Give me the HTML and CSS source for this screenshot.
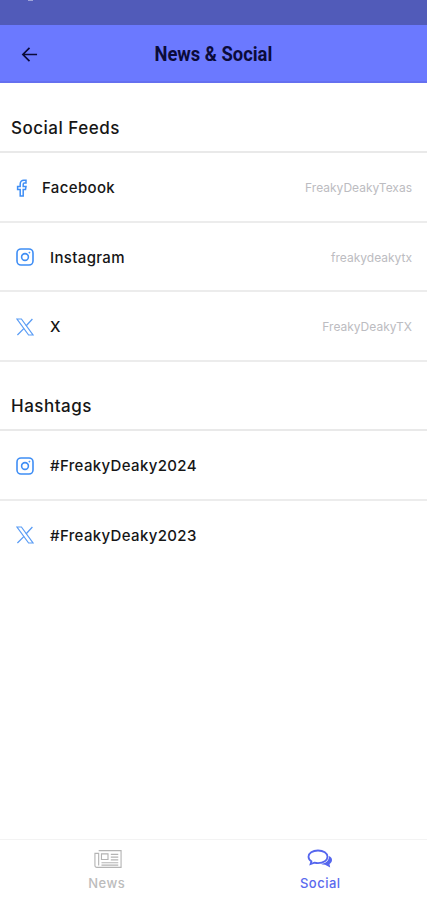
FILE: index.html
```html
<!DOCTYPE html>
<html lang="en">
<head>
  <meta charset="UTF-8">
  <meta name="viewport" content="width=device-width, initial-scale=1.0" />
  <title>News &amp; Social</title>
  <link rel="stylesheet" href="styles.css">
</head>
<body>
  <div class="status-bar"><span class="status-mark"></span></div>
  <header class="top-bar">
    <svg class="back-icon" viewBox="0 0 18 18" width="17" height="17" fill="none" stroke="#0b0b3a" stroke-width="1.8">
      <path d="M17 9H2M9 2L2 9l7 7"/>
    </svg>
    <h1>News &amp; Social</h1>
  </header>

  <main class="content">
    <h2 class="section-title">Social Feeds</h2>
    <a class="row row-facebook">
      <svg class="icon icon-fb" viewBox="0 0 12 18" width="12" height="18" fill="none" stroke="#3f8ef5" stroke-width="1.5">
        <path d="M4.2 17V10.6H1.6V7.6H4.2V5C4.2 2.6 5.6 1.2 7.8 1.2H10V4H8.4C7.5 4 7.2 4.5 7.2 5.3V7.6H10L9.5 10.6H7.2V17Z"/>
      </svg>
      <span class="row-label">Facebook</span>
      <span class="row-handle">FreakyDeakyTexas</span>
    </a>
    <a class="row">
      <svg class="icon" viewBox="0 0 18 18" width="18" height="18" fill="none" stroke="#3f8ef5" stroke-width="1.6">
        <rect x="1" y="1" width="16" height="16" rx="4"/>
        <circle cx="9" cy="9" r="3.4"/>
        <circle cx="13.4" cy="4.6" r="0.6" fill="#3f8ef5" stroke-width="0.6"/>
      </svg>
      <span class="row-label">Instagram</span>
      <span class="row-handle">freakydeakytx</span>
    </a>
    <a class="row">
      <svg class="icon" viewBox="0 0 18 18" width="18" height="18" fill="none" stroke="#5b9df5" stroke-width="1.2">
        <path d="M1 1H5.4L17 17H12.6Z"/>
        <path d="M16.4 1L10 8M8 10.4L1.400 17" stroke-width="1.3"/>
      </svg>
      <span class="row-label">X</span>
      <span class="row-handle">FreakyDeakyTX</span>
    </a>

    <h2 class="section-title section-gap">Hashtags</h2>
    <a class="row">
      <svg class="icon" viewBox="0 0 18 18" width="18" height="18" fill="none" stroke="#3f8ef5" stroke-width="1.6">
        <rect x="1" y="1" width="16" height="16" rx="4"/>
        <circle cx="9" cy="9" r="3.4"/>
        <circle cx="13.4" cy="4.6" r="0.6" fill="#3f8ef5" stroke-width="0.6"/>
      </svg>
      <span class="row-label">#FreakyDeaky2024</span>
    </a>
    <a class="row row-last">
      <svg class="icon" viewBox="0 0 18 18" width="18" height="18" fill="none" stroke="#5b9df5" stroke-width="1.2">
        <path d="M1 1H5.4L17 17H12.6Z"/>
        <path d="M16.4 1L10 8M8 10.4L1.400 17" stroke-width="1.3"/>
      </svg>
      <span class="row-label">#FreakyDeaky2023</span>
    </a>
  </main>

  <nav class="tab-bar">
    <a class="tab">
      <svg class="news-icon" viewBox="0 0 30 20" width="28" height="20" fill="none" stroke="#b4b4b4" stroke-width="1.2">
        <path d="M5 1H29V19H3C1.9 19 1 18.1 1 17V4H5V17"/>
        <path d="M8 4.5H15V10.5H8Z"/>
        <path d="M18 5H26M18 8H26M18 11H26M8 14H26M8 16.5H26"/>
      </svg>
      <span>News</span>
    </a>
    <a class="tab tab-active">
      <svg viewBox="0 0 26 20" width="26" height="20" fill="none" stroke="#5566ee" stroke-width="1.8">
        <path d="M11 1.5C5.5 1.5 1.5 4.3 1.5 7.8C1.5 9.6 2.6 11.2 4.4 12.3L3.6 15L7.4 13.6C8.5 13.9 9.7 14.1 11 14.1C16.500 14.100 20.500 11.300 20.500 7.800C20.500 4.300 16.500 1.500 11 1.500Z"/>
        <path d="M21.800 7C24.200 8 25 9.400 25 11C25 12.600 24 14 22.500 14.900L23.200 18.500L18 15.800C16.300 15.800 14.800 15.500 13.500 14.800C18 14.800 22.500 12 21.800 7Z" fill="#5566ee" stroke="none"/>
      </svg>
      <span>Social</span>
    </a>
  </nav>
</body>
</html>
```

FILE: styles.css
```css
* {
  box-sizing: border-box;
}

body {
  margin: 0;
  height: 900px;
  display: flex;
  flex-direction: column;
  background: white;
  font-family: Inter, 'Noto Sans', sans-serif;
  color: #161616;
  overflow: hidden;
}

.status-bar {
  height: 25px;
  background: #515bb9;
  padding-left: 28px;
}

.status-mark {
  display: block;
  width: 5px;
  height: 1px;
  background: #9ea3d8;
}

.top-bar {
  height: 58px;
  display: flex;
  align-items: center;
  justify-content: center;
  position: relative;
  background: #6b79ff;
  border-bottom: 2px solid #6570f0;
}

.back-icon {
  position: absolute;
  left: 21px;
  top: 21px;
}

.top-bar h1 {
  margin: 2px 0 0;
  font-family: Roboto, 'Liberation Sans', sans-serif;
  font-size: 21px;
  font-weight: 700;
  color: #0b0b3a;
  transform: scaleX(0.875);
}

.content {
  flex: 1;
}

.section-title {
  margin: 0;
  height: 70px;
  padding: 34px 11px 0;
  font-size: 17px;
  font-weight: 500;
  line-height: 22px;
  letter-spacing: 0.5px;
  border-bottom: 2px solid #e9e9e9;
}

.section-gap {
  height: 69.5px;
  padding-top: 33px;
}

.row {
  height: 69.5px;
  display: flex;
  align-items: center;
  padding: 2px 15px 0 16px;
  border-bottom: 2px solid #ececec;
}

.row-last {
  padding-top: 0;
  border-bottom: none;
}

.icon {
  flex: none;
}

.row-label {
  margin-left: 16px;
  font-size: 15px;
  font-weight: 500;
  letter-spacing: 0.35px;
}

.row-facebook .row-label {
  margin-left: 14px;
}

.row-handle {
  margin-left: auto;
  font-size: 12px;
  color: #bcbcc1;
}

.tab-bar {
  height: 61px;
  display: grid;
  grid-template-columns: 1fr 1fr;
  border-top: 1px solid #f3f3f3;
}

.tab {
  display: flex;
  flex-direction: column;
  align-items: center;
  padding-top: 9px;
  gap: 6px;
  font-size: 13px;
  font-weight: 500;
  letter-spacing: 0.5px;
  color: #bcbcbc;
}

.news-icon {
  margin-left: 2px;
}

.tab-active {
  color: #5a6aee;
}
```
